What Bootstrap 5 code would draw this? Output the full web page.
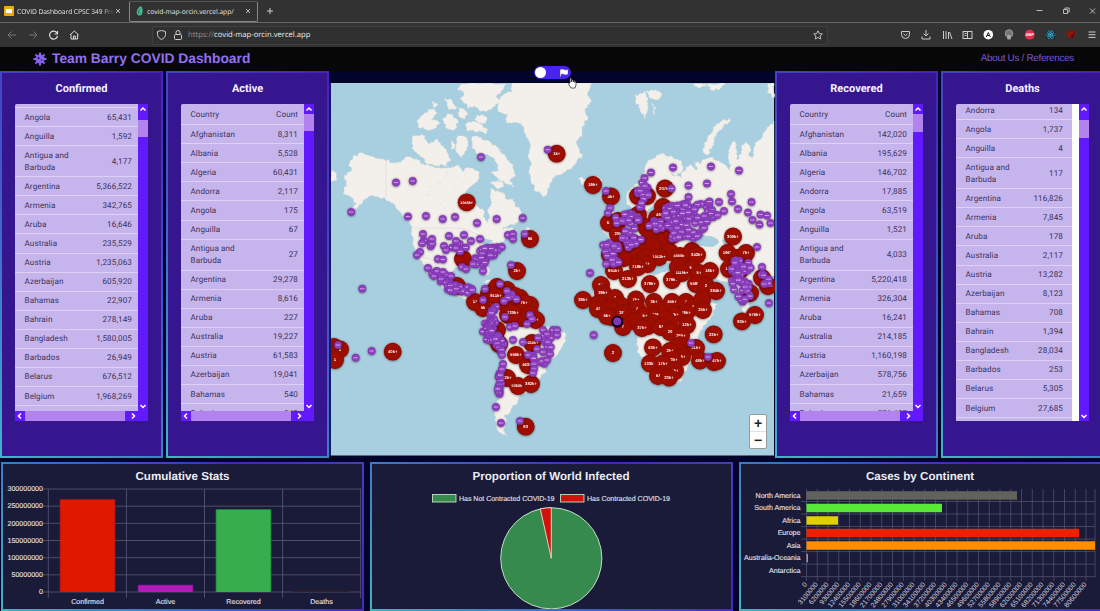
<!DOCTYPE html>
<html lang="en">
<head>
<meta charset="utf-8">
<meta name="viewport" content="width=device-width, initial-scale=1">
<title>Team Barry COVID Dashboard</title>
<link href="https://cdn.jsdelivr.net/npm/bootstrap@5.3.0/dist/css/bootstrap.min.css" rel="stylesheet">
<style>
body{width:1100px;height:611px;overflow:hidden;background:#02042b;font-family:Roboto,sans-serif;font-size:8px;line-height:1.4;text-rendering:geometricPrecision}
svg{display:block;flex:none}
.tabstrip{height:22px;background:#323232;color:#e4e4e4;font:6.7px "Open Sans",sans-serif}
.tab-a{width:129px;padding:0 8px 0 4px}
.tab-b{width:129px;height:21px;border:1px solid #888;border-top-color:#555;border-radius:2px;padding:0 6px}
.fade-title{width:98px;margin-left:3px;overflow:hidden;white-space:nowrap;letter-spacing:-.08px;-webkit-mask-image:linear-gradient(90deg,#000 86%,transparent)}
.toolbar{height:25px;background:#333;border-top:1px solid #686868;color:#bbb;padding:0 0 0 7px}
.urlbox{width:676px;height:19px;border:1px solid #404040;background:#303030;border-radius:2px;font:7.65px "Open Sans",sans-serif;color:#eee;padding:0 4px}
.urlbox .dim{color:#929292}
.addr{padding-left:1px}
.appbar{height:24px;background:#070708;color:#9370f3;padding:0 26px 0 33px;font-family:"Liberation Sans",sans-serif}
.brand{font-size:13.8px;font-weight:bold;margin-left:5px;line-height:1}
.about{font-size:9.9px;letter-spacing:-.29px;color:#7858cf;line-height:1}
.main{height:387px}
.framed{border:2px solid transparent;flex:none}
.stat{width:163px;height:387px;background:linear-gradient(#35168f,#35168f) padding-box,linear-gradient(45deg,#42b4ca,#3f62cb 45%,#481fc0) border-box}
.stat h2{font:bold 11px/13px Roboto,sans-serif;color:#f7f4ff;margin:8.5px 0 9.5px;text-align:center}
.listbox{width:133px;height:317px;margin-left:13px;border-radius:2px 0 0 0;background:#6319ff;overflow:hidden}
.listview{width:123px;background:#c5b5ec;overflow:hidden;color:#3d315d}
.whitegap{width:7px;background:#fff}
.item{min-height:19.06px;border-bottom:1px solid #dfd1f3;padding:.8px 6px 0 9.5px;font-size:8.1px;line-height:11.5px;letter-spacing:.09px}
.item.head-item{min-height:21.3px}
.item span:first-child{width:60px}
.item.two{min-height:31px}
.vbar{width:10px}
.vthumb{background:#b283ef}
.hbar{height:10px}
.hthumb{width:100px;height:10px;background:#b283ef}
.mapcol{width:446px}
.toggle-area{height:12px}
.switch{left:534px;top:66px;width:37px;height:13px;border-radius:7px;background:#4a24ee;padding:0 3px 0 1px}
.switch i{width:11px;height:11px;border-radius:50%;background:#fff}
.zoomer{left:749px;top:414px;width:18px;height:35px;background:#fff;border:1px solid #999;border-radius:2px;font:bold 14px/16px "Liberation Sans";color:#222}
.charts{padding:4px 0 0 1px;gap:5.500px}
.chartbox{width:363.3px;height:149px;background:linear-gradient(#1a1a39,#1a1a39) padding-box,linear-gradient(45deg,#42b4bd,#3f70c8 35%,#4823bd 75%,#4540b8) border-box}
.chartbox text,.mapsvg text{font-family:"Liberation Sans",sans-serif}
</style>
</head>
<body>
<header>
<div class="tabstrip d-flex align-items-center">
 <div class="tab-a d-flex align-items-center">
  <svg width="10" height="10" viewBox="0 0 10 10"><rect width="10" height="10" rx="1" fill="#f0a818"/><rect x="2" y="3" width="6" height="4" fill="#fff"/></svg>
  <span class="fade-title">COVID Dashboard CPSC 349 Pro</span>
  <svg width="6" height="6" viewBox="0 0 6 6"><path d="M1 1l4 4M5 1l-4 4" stroke="#ddd" stroke-width=".8"/></svg>
 </div>
 <div class="tab-b d-flex align-items-center">
  <svg width="7" height="10" viewBox="0 0 7 10"><path d="M5 0C2 1 0 5 1 8c1 2 4 2 5 0 1-3 1-6-1-8z" fill="#48b492"/><path d="M4.500 3C3 4 2 6 3 8" stroke="#246b60" fill="none"/></svg>
  <span class="ms-1 me-auto">covid-map-orcin.vercel.app/</span>
  <svg width="6" height="6" viewBox="0 0 6 6"><path d="M1 1l4 4M5 1l-4 4" stroke="#ddd" stroke-width=".8"/></svg>
 </div>
 <svg class="ms-2" width="8" height="8" viewBox="0 0 8 8"><path d="M4 1v6M1 4h6" stroke="#ccc"/></svg>
 <svg class="ms-auto" width="70" height="12" viewBox="1030 4 70 12" fill="none" stroke="#bbb"><path d="M1036.500 9.500h6M1090 7.500l5 5m0-5l-5 5"/><path d="M1063.500 8.500h4v4h-4zM1065 8.500V7h4.200V11h-1.500"/></svg>
</div>
<div class="toolbar d-flex align-items-center">
 <svg width="145" height="20" viewBox="7 25 145 20" fill="none" stroke="#777"><path d="M16 35H8m3.500-3.500L8 35l3.500 3.500M29 35h8m-3.500-3.500L37 35l-3.500 3.500"/><path d="M57 33a4 4 0 1 0 .5 3M57.500 31v3h-3" stroke="#ddd" stroke-width="1.200"/><path d="M70 35l4.300-4 4.300 4M71 34.500V39h6.600v-4.500M73.500 39v-3h1.800v3" stroke="#ddd"/></svg>
 <div class="urlbox d-flex align-items-center">
  <svg width="26" height="12" viewBox="0 0 26 12" fill="none" stroke="#ccc"><path d="M4.500 1.500l4 1v3c0 2.500-2 4-4 5-2-1-4-2.500-4-5v-3z"/><rect x="17.500" y="5.500" width="7" height="5" rx="1"/><path d="M19 5V3.500a2 2 0 0 1 4 0V5"/></svg>
  <span class="me-auto addr"><span class="dim ms-1">https://</span>covid-map-orcin.vercel.app</span>
  <svg width="10" height="10" viewBox="0 0 10 10"><path d="M5 .8l1.300 2.800 3 .3L7 6l.7 3L5 7.500 2.300 9 3 6 .7 3.900l3-.3z" fill="none" stroke="#ccc" stroke-width=".9"/></svg>
 </div>
 <svg width="272" height="20" viewBox="828 25 272 20" fill="none" stroke="#ccc">
  <path d="M901.500 31.500h8v3a4 4 0 0 1-8 0zM903.500 33.800l2 1.800 2-1.800M926 30v6m-2.500-2.500L926 36l2.500-2.500M922 36.500V39h8v-2.500"/>
  <path d="M943.500 31v8m2.500-8v8m2.500-7v7m1-7l2.500 7"/><rect x="963" y="31.500" width="9" height="7"/><path d="M967.500 32v6M964.500 33.500h2m-2 2h2"/>
  <circle cx="988.300" cy="34.700" r="4.800" fill="#fff" stroke="none"/><path d="M986.300 37l2-4.500 2 4.500m-3.200-1.500h2.400" stroke="#222"/>
  <circle cx="1009" cy="33.500" r="3.800" fill="#777" stroke="#999"/><path d="M1007.500 35v4h3v-4" fill="#aaa" stroke="#999"/>
  <circle cx="1029.700" cy="34.700" r="4.900" fill="#e52d49" stroke="none"/><text x="1029.700" y="36.200" font-family="Liberation Sans" font-weight="bold" font-size="4" fill="#fff" stroke="none" text-anchor="middle">ABP</text>
  <rect x="1046" y="30.500" width="9" height="8.500" fill="#17252d" stroke="none"/><g stroke="#35a5c8" stroke-width=".7"><ellipse cx="1050.500" cy="34.700" rx="4.500" ry="1.700"/><ellipse cx="1050.500" cy="34.700" rx="4.500" ry="1.700" transform="rotate(60 1050.500 34.700)"/><ellipse cx="1050.500" cy="34.700" rx="4.500" ry="1.700" transform="rotate(120 1050.500 34.700)"/></g><circle cx="1050.500" cy="34.700" r="1" fill="#5cc" stroke="none"/>
  <path d="M1066.500 32l4-1.500 5.500 .5-.5 4-4 4-5-3.500z" fill="#8d140f" stroke="none"/><path d="M1071 36l1 3 4-8z" fill="#4f0a0a" stroke="none"/>
  <path d="M1088.500 32h7m-7 2.700h7m-7 2.700h7"/>
 </svg>
</div>
</header>
<nav class="appbar d-flex align-items-center">
 <svg width="14" height="14" viewBox="-7 -7 14 14"><circle r="4.600" fill="#8463e8"/><path d="M0-6.500v13M-6.500 0h13M-4.600-4.600l9.200 9.200M4.600-4.600l-9.200 9.200" stroke="#8463e8" stroke-width="2"/><circle cx="-1.400" cy="-1" r="1.100" fill="#2a1760"/><circle cx="1.600" cy="1" r=".8" fill="#2a1760"/></svg>
 <span class="brand me-auto">Team Barry COVID Dashboard</span>
 <span class="about">About Us / References</span>
</nav>
<div class="switch position-absolute d-flex align-items-center justify-content-between"><i></i><svg width="8" height="8" viewBox="0 0 8 8"><path d="M.5.500v7M1 1q1.500-.8 3 0t3.500 0v4q-2 .8-3.500 0T1 5z" fill="#fff" stroke="#fff" stroke-width=".7"/></svg></div>
<main class="main d-flex">
 <section class="framed stat" data-k="confirmed"></section>
 <section class="framed stat" data-k="active" style="margin-left:3px"></section>
 <div class="mapcol"><div class="toggle-area"></div>
 <svg class="mapsvg" id="map" width="446" height="373" viewBox="329 83 446 373"></svg></div>
 <section class="framed stat" data-k="recovered"></section>
 <section class="framed stat" data-k="deaths" style="margin-left:3px"></section>
</main>
<div class="zoomer position-absolute text-center"><div class="border-bottom">+</div><div>−</div></div>
<svg class="position-absolute" style="left:567px;top:77px" width="11" height="12" viewBox="0 0 11 12"><path d="M3 6V1.500q.7-1 1.400 0V5l.3-2q.8-.6 1.300 0l.2 2 .4-1.300q.8-.4 1.200.3V5.500l.5-.9q.7 0 .7 1V8L8 11H4L1.500 7q0-1 1.500-1z" fill="#fff" stroke="#222" stroke-width=".7"/></svg>
<div class="charts d-flex">
 <section class="framed chartbox"><svg id="bars" width="359" height="145" viewBox="3 464 359 145"></svg></section>
 <section class="framed chartbox"><svg id="pie" width="359" height="145" viewBox="372 464 359 145"></svg></section>
 <section class="framed chartbox"><svg id="cont" width="359" height="145" viewBox="741 464 359 145"></svg></section>
</div>
<script src="https://cdn.jsdelivr.net/npm/bootstrap@5.3.0/dist/js/bootstrap.bundle.min.js"></script>
<script>
/* ---------- country lists ---------- */
const names='Afghanistan|Albania|Algeria|Andorra|Angola|Anguilla|Antigua and Barbuda|Argentina|Armenia|Aruba|Australia|Austria|Azerbaijan|Bahamas|Bahrain|Bangladesh|Barbados|Belarus|Belgium|Belize'.split('|');
const lists={
 confirmed:{t:'Confirmed',from:3,head:0,shift:-14.8,thumb:16,th:17.3,v:' |65,431|1,592|4,177|5,366,522|342,765|16,646|235,529|1,235,063|605,920|22,907|278,149|1,580,005|26,949|676,512|1,968,269| '},
 active:{t:'Active',from:0,head:1,shift:0,thumb:10,th:17.3,v:'8,311|5,528|60,431|2,117|175|67|27|29,278|8,616|227|19,227|61,583|19,041|540|348'},
 recovered:{t:'Recovered',from:0,head:1,shift:0,thumb:10,th:17.5,v:'142,020|195,629|146,702|17,885|63,519|1,521|4,033|5,220,418|326,304|16,241|214,185|1,160,198|578,756|21,659|276,407'},
 deaths:{t:'Deaths',from:3,head:0,shift:-2.8,thumb:15.5,th:18,v:'134|1,737|4|117|116,826|7,845|178|2,117|13,282|8,123|708|1,394|28,034|253|5,305|27,685| '}
};
const chev=d=>`<svg width="10" height="10" viewBox="0 0 10 10"><path d="${d}" fill="none" stroke="#fff" stroke-width="1.500"/></svg>`;
document.querySelectorAll('.stat').forEach(el=>{
 const L=lists[el.dataset.k],d=el.dataset.k==='deaths';
 const row=(a,b,c='')=>`<div class="item d-flex align-items-center justify-content-between ${c}"><span>${a}</span><span>${b}</span></div>`;
 let rows=L.head?row('Country','Count','head-item'):'';
 L.v.split('|').forEach((v,i)=>{const n=names[L.from+i];rows+=row(v===' '?'':n,v,n.length>14?'two':'')});
 const h=d?317:307;
 el.innerHTML=`<h2>${L.t}</h2><div class="listbox"><div class="d-flex" style="height:${h}px"><div class="listview" style="${d?'width:116px':''}"><div style="margin-top:${L.shift}px">${rows}</div></div>${d?'<div class="whitegap"></div>':''}<div class="vbar d-flex flex-column">${chev('M2.500 6.500L5 4l2.500 2.500')}<div class="vthumb" style="margin-top:${L.thumb-10}px;height:${L.th}px"></div><div class="mt-auto">${chev('M2.500 4L5 6.500 7.500 4')}</div></div></div>${d?'':`<div class="hbar d-flex">${chev('M6 2.500L3.500 5 6 7.500')}<div class="hthumb me-1"></div>${chev('M3 2.500L5.500 5 3 7.500')}</div>`}</div>`;
});
document.querySelectorAll('[data-k=deaths] .item').forEach(e=>{e.style.paddingRight='9px'});

/* ---------- map ---------- */
let seed=11;const rnd=()=>(seed=(seed*16807)%2147483647)/2147483647;
/* roughen a coastline by midpoint displacement */
function coast(str,amp=1.1){let p=str.trim().split(/\s+/).map(s=>s.split(',').map(Number));
 for(let k=0;k<3;k++){const q=[];p.forEach((a,i)=>{const b=p[(i+1)%p.length],l=Math.hypot(b[0]-a[0],b[1]-a[1]);q.push(a);if(l>2&&l<60)q.push([(a[0]+b[0])/2+(rnd()-.5)*amp*2.2,(a[1]+b[1])/2+(rnd()-.5)*amp*2.2])});p=q}
 return `<path d="M${p.map(a=>a.map(n=>n.toFixed(1))).join('L')}Z"/>`}
const land=[
'347,183 344,175 353,172 349,164 351,160 355,155 362,153 372,157 383,159 392,163 398,162 408,157 418,160 424,165 430,166 447,168 458,165 463,172 468,167 473,170 479,174 477,182 470,187 465,193 467,200 475,206 483,210 485,218 487,223 490,217 489,208 491,200 490,189 497,191 503,192 508,200 513,199 517,207 523,217 517,223 508,226 503,229 512,227 517,232 515,239 508,237 500,243 497,250 490,258 486,264 489,272 487,276 483,268 475,264 465,265 457,267 452,272 451,281 456,288 462,285 467,284 465,291 472,294 474,302 481,304 478,306 468,300 455,295 445,289 437,283 432,275 425,264 429,275 424,267 417,256 413,245 413,227 406,217 398,210 393,202 383,198 370,196 363,202 355,210 345,214 357,204 350,196 344,192',
'413,135 423,135 429,144 437,139 444,148 451,160 447,165 440,165 425,162 418,154 412,148',
'472,138 478,136 487,140 497,147 503,154 512,164 515,174 510,180 514,187 506,184 497,177 490,173 498,171 496,162 487,154 477,154 472,145',
'462,84 506,84 502,91 496,96 500,103 490,110 480,111 474,106 468,109 460,99 464,94 458,90',
'466,124 476,122 487,128 487,133 475,132 466,130','478,115 487,118 486,123 480,124 473,119',
'417,120 424,113 432,109 437,113 431,120 439,122 437,128 427,130 418,127','442,118 453,114 458,120 455,129 446,128 444,123',
'444,99 452,100 457,108 448,109','457,137 468,137 468,146 462,158 456,151','452,140 457,146 451,149','458,107 467,112 465,119 459,117',
'432,102 438,104 434,108','331,171 336,173 337,179 331,182','490,183 498,180 504,186 498,189','522,229 528,227 533,236 524,236',
'483,281 492,280 500,285 494,285','502,286 508,286 507,289 501,289',
'512,83 593,83 588,92 590,103 585,111 588,119 582,128 583,137 576,143 580,150 582,157 577,162 572,168 567,170 560,174 554,178 550,184 547,193 543,197 537,192 531,183 529,172 532,164 528,156 531,146 526,137 522,126 515,122 505,122 508,115 498,110 500,97 510,92',
'578,178 582,176 588,181 598,177 602,182 595,187 586,186 581,184',
'635,95 644,92 648,98 648,107 645,119 640,111 636,103','646,91 656,89 662,93 659,99 650,98','652,103 656,109 654,115','693,85 700,83 708,85 699,88','706,84 725,83 718,90 710,89',
'730,118 722,121 715,126 710,135 704,143 703,151 708,155 711,149 714,140 718,132 724,125 731,121','768,83 774,83 774,98 768,93',
'627,193 632,187 638,183 643,173 647,163 654,158 660,154 668,156 674,159 682,164 684,171 677,175 671,174 681,178 684,171 690,164 697,170 694,162 701,163 708,158 716,160 724,164 730,170 728,157 731,145 734,141 737,149 737,160 742,149 747,142 750,147 748,156 753,158 754,147 758,141 763,134 768,127 774,121 774,276 766,279 759,287 752,294 748,308 744,313 739,302 734,290 729,283 720,282 712,279 705,277 714,285 721,287 717,293 708,299 699,303 710,303 717,304 713,315 704,325 698,337 698,350 691,360 687,370 682,379 674,385 659,385 651,382 647,372 644,360 637,352 638,337 635,328 625,322 615,325 603,322 595,312 592,303 593,292 600,280 606,271 613,266 610,262 610,250 620,247 618,240 612,235 624,230 630,221 633,211 627,204',
'603,226 610,219 617,225 619,238 610,239 604,233','608,209 616,212 617,223 610,220',
'476,303 486,297 492,287 505,289 517,292 525,304 536,315 544,326 556,329 565,333 563,345 558,354 548,360 546,371 536,379 531,391 521,393 518,403 513,405 511,410 504,416 506,423 503,430 508,436 499,432 495,420 496,407 499,393 501,370 502,355 494,345 486,335 481,326 485,316'];
const lakes=['616,263 625,257 637,255 646,264 655,265 665,262 678,265 686,267 682,274 669,271 654,275 645,270 626,265','693,240 700,235 712,236 720,242 713,247 701,246','722,240 728,238 732,251 735,259 727,256','664,186 667,182 668,192 662,205 652,215 645,212 654,205 662,198','479,240 484,238 493,241 487,246','694,282 704,296 699,292','744,246 750,244 748,250'];
let m=`<defs><radialGradient id="rd"><stop offset=".8" stop-color="#9d0900"/><stop offset="1" stop-color="#860600"/></radialGradient><filter id="sh" x="-5%" y="-5%" width="110%" height="110%"><feDropShadow dx="0" dy=".4" stdDeviation=".9" flood-opacity=".6"/></filter></defs><rect x="329" y="83" width="446" height="373" fill="#02042b"/><rect x="331" y="83" width="443" height="372.500" fill="#a8cfe0"/><g fill="#f3f0eb" stroke="#ddd9d8" stroke-width=".35">${land.map(s=>coast(s)).join('')}</g><g fill="#a8cfe0">${lakes.map(s=>coast(s,.5)).join('')}</g><path d="M386 159v38M414 228h46l22 8M418 256l20 5" stroke="#d5ccd0" stroke-width=".5" fill="none"/>`;
for(let i=0;i<45;i++){const x=420+rnd()*45,y=170+rnd()*42;m+=`<path d="M${x} ${y}l${rnd()*2} ${-rnd()*1.5}" stroke="#c5dbe2" stroke-width=".6"/>`}
const red=`466.700,202.300,1040k+ 530,239,96 463,259, 556.700,153.700,1k+ 593,185,19k+ 611,196.500,4k+ 638,196,52 647,196,5k+ 665,188.500,207k+ 609,223,63 618,221, 638,215,k+ 663,207, 657,218, 662,215,492k+ 646,227, 660,230, 633,243, 626,246, 650,237, 666,241, 672,235, 618,234,20k 640,251, 653,246, 646,257, 670,252, 628,256, 610,255,1 624,258, 659,257,1012k+ 688,262, 680,256,4000k+ 692,251, 697,255,342k+ 733,236.500,300k+ 727.500,253,196k 737,258, 746,253,7k+
517,271,2k+ 457,286, 497,287, 507,290, 489,294, 520,298, 515,296, 512,303, 530,305, 475,302,17 498,298, 496,296,911k+ 483,308,5k 524,303,7k+ 507,305, 522,318, 530,314, 508,315, 513,313,720k+ 536,320,k+ 497,330, 495,337, 499,344, 532,343,2216k+ 516,355,556k+ 528,365,4635k 507,378,22k+ 518,386,5366k+ 531,384,382k+ 525.700,426.700,83 392.700,351.700,40k+ 334,347, 340,349.300,1 335,360,1
613,353,2 713.700,334.300,23k+ 742,321.300,93k+ 755,315,576k+ 750,293,k+ 768,286,220k 762,278, 729,269,157 740,270, 647.500,264,k+ 638,267,719k+ 614,271,951k+ 628,279,213k+ 650,284,379k+ 678,267, 692,268,k+ 672,280,379k+ 682,273,1119k+ 699,273,k+ 710,271,18k+ 696,284,558k+ 706,286,2 716,291,384k+ 601,285,k+ 603,293,39k+ 583,300,38k+ 598,304, 598,309,47 615,298,7 620,305, 610,309, 612,317, 607,316,5k+ 624,313,26k+ 636,299.500,7k+ 637,309,7 631,317, 654,302,3k+ 645,316,k+ 657,315,19k+ 666,309, 672,302,45k+ 686,302,7 693,307,7 702,300, 703,310,25k+ 686,313,79k+ 674,315,17k+ 666,319, 634,321, 623,327,7 653,323, 648,326, 642,328,37k+ 661,327,97 679,324,k 687,325,12k+ 670,332,20 681,336,26k+ 680,345, 653,347.500,63k+ 676,348, 670,351,2k+ 696,348,21k+ 682,357,5k+ 673,360,72k+ 650,363.500,133k+ 663,363.500,17k+ 700,360.500,48k+ 714,362, 717,361,47k+ 658,376,57 675,371,1k+ 669,377.500,23k+`.split(/\s+/).map(s=>s.split(','));
let R='',P='';
red.forEach(([x,y,t])=>{R+=`<circle cx="${x}" cy="${y}" r="8.900" fill="url(#rd)"/>`+(t?`<text x="${x}" y="${+y+1.400}" text-anchor="middle" font-size="${t.length>5?3.8:4.2}" font-weight="bold" fill="#fff">${t}</text>`:'')});
const pd=(x,y)=>{P+=`<circle cx="${x.toFixed(1)}" cy="${y.toFixed(1)}" r="3.700" fill="#8f41c0" stroke="#6f2c9f" stroke-width=".5"/><path d="M${(x-2.2).toFixed(1)} ${y.toFixed(1)}h4.400" stroke="#f0d0f5" stroke-width="1.100" stroke-dasharray="1 .3" opacity=".85"/>`};
/* regional clusters: centre x, centre y, radius x, radius y, count, tilt */
[[496,250,9,4,12,-.6],[484,254,10,6,12,-.3],[460,247,10,5,6,0],[428,243,7,6,5,.5],[480,263,6,7,6,0],[440,277,12,5,11,.5],[455,289,8,4,18,.25],[468,290,6,3,6,0],
[493,317,3,17,24,.1],[488,333,5,11,17,-.45],[500,343,4,10,14,-.2],[500,384,2.5,14,17,0],[512,294,10,6,4,.3],[542,349,10,17,10,.2],
[642,195,7,13,17,0],[610,249,9,9,17,0],[628,219,14,7,18,-.15],[632,240,10,12,14,0],[662,222,15,7,18,-.2],[681,211,17,10,34,0],[690,225,15,14,38,0],[676,234,9,7,11,0],[705,211,12,10,13,0],
[612,262,8,3,7,0],[742,268,12,9,20,.3],[743,291,9,12,16,0],[765,279,7,6,9,0],[736,277,7,8,7,0]
].forEach(([cx,cy,rx,ry,n,t])=>{for(let i=0;i<n;i++){const a=rnd()*6.28,r=Math.sqrt(rnd()),u=Math.cos(a)*r*rx,v=Math.sin(a)*r*ry;pd(Math.min(771,cx+u*Math.cos(t)-v*Math.sin(t)),cy+u*Math.sin(t)+v*Math.cos(t))}});
`481,157 396,182.500 412.700,181 351.300,212 408,216.500 426,216 442.700,219 455,217 477,223 496.700,219 522.700,218 547.700,149.700 423,234 432,239 449,236 464,235 456,241 471,241 480,239 444,246 446,250 456,248 420,252 417,255 438,259 443,259.500 508,235 513,234 513,239 524.700,234 428,268 434,276 437,271 443,272 451,276 362.300,288.700 355.700,357.700 371.700,351 338,345 462,267 466,269 473,264 483,271 511,265 485,289 483,300 500,284 507,291 504,301 505,317 530,315 532,319 527,324 510,327 515,326 513,340 523,342 528,355 534,364 534,369 533,373 538,338 537,349 543,330 547,334 553,330 548,342 543,352 550,354 542,361 547,360 557,330 557,335 502,355 503,364 502,369 496,407 501,423 520,421 593.700,335 590,273 691,343 708,357 762,267 769,303 651,172.500 644.500,178 673,167.500 711,166.500 739,170.500 707,183.500 688.500,185.500 688.500,197 709.500,201.500 719,202 731,194 732,201.500 751.500,202 738,209 724,211 748,212.500 760.500,214.500 767,215.500 752.500,220 759.500,224.500 770.500,223 757,247 711,213.500 717.500,215 707,221.500 610,208 608,213 606,191 671.500,188.500 645,186`.split(/\s+/).forEach(s=>pd(...s.split(',').map(Number)));
m+=`<g filter="url(#sh)">${R}</g><circle cx="617.300" cy="321.700" r="6" fill="#130321"/><g filter="url(#sh)">${P}<circle cx="617.300" cy="321.300" r="3.900" fill="#8038b8"/></g><path d="M329 83h2v373h-2z" fill="#1c1668"/>`;
document.getElementById('map').innerHTML=m;

/* ---------- charts ---------- */
const T=(x,y,s,o='')=>`<text x="${x}" y="${y}" font-size="7.100" fill="#e0e0e8" stroke="#e0e0e8" stroke-width=".12" ${o}>${s}</text>`;
const title=(x,s)=>`<text x="${x}" y="480" font-size="11.600" font-weight="bold" fill="#ececf2" text-anchor="middle">${s}</text>`;
let b=title(182.500,'Cumulative Stats')+'<g stroke="#5b5c73" stroke-width=".8">';
for(let i=0;i<7;i++)b+=`<path d="M43 ${489+i*17.170}H361"/>`;
for(let i=0;i<5;i++)b+=`<path d="M${48.300+i*78.100} 489V598"/>`;
b+='</g>';
for(let i=0;i<7;i++)b+=T(43,491.300+i*17.170,(300-i*50)?(300-i*50)+'000000':'0','text-anchor="end"');
[['Confirmed',60,499.500,'#e01800','#8f1a1a'],['Active',138,585,'#b51abb','#6d1880'],['Recovered',216,509.500,'#37ad4d','#1c7f39'],['Deaths',294,591,'#302027','#302027']].forEach(([n,x,y,c,s])=>{b+=`<path d="M${x} 592V${y}h55V592" fill="${c}" stroke="${s}" stroke-width=".8"/>`+T(x+27.500,604,n,'text-anchor="middle"')});
document.getElementById('bars').innerHTML=b;
document.getElementById('pie').innerHTML=title(551,'Proportion of World Infected')+`<g stroke="#c5ddc5" stroke-width=".9"><rect x="432.500" y="494.500" width="23.500" height="7.500" fill="#368a4d"/><rect x="560.500" y="494.500" width="23.500" height="7.500" fill="#d0120a"/></g>`+T(459,500.500,'Has Not Contracted COVID-19','textLength="95.500"')+T(587,500.500,'Has Contracted COVID-19','textLength="83"')+`<circle cx="551.300" cy="558.300" r="50.600" fill="#368a4d" stroke="#c5ddc5"/><path d="M551.300 558.300L540.300 508.900A50.600 50.600 0 0 1 551.300 507.700Z" fill="#d0120a" stroke="#e8d0c5"/>`;
let c=title(920,'Cases by Continent')+'<g stroke="#50516c" stroke-width=".8">';
for(let i=0;i<27;i++)c+=`<path d="M${806.500+i*10.750} 489V581"/>`;
c+='<path d="M1095 489V577"/>';
for(let i=1;i<8;i++)c+=`<path d="M801 ${489+i*12.520}H1095"/>`;
c+='</g>';
[['North America',1017,'#62625c'],['South America',942,'#57e935'],['Africa',838,'#e2cf00'],['Europe',1079,'#ea2200'],['Asia',1095,'#ff8f00'],['Australia-Oceania',808,'#b08b9a'],['Antarctica',806.500,'none']].forEach(([n,x,f],i)=>{const y=491.200+i*12.520;c+=`<rect x="806.500" y="${y}" width="${x-806.500}" height="8.500" fill="${f}"/>`+T(800.500,y+6.300,n,'text-anchor="end"')});
for(let i=0;i<27;i++){const x=807.500+i*10.750;c+=`<text transform="translate(${x} 584.500) rotate(-50)" text-anchor="end" font-size="6.900" fill="#d5d5df">${i*3100000}</text>`}
document.getElementById('cont').innerHTML=c;
</script>
</body>
</html>
